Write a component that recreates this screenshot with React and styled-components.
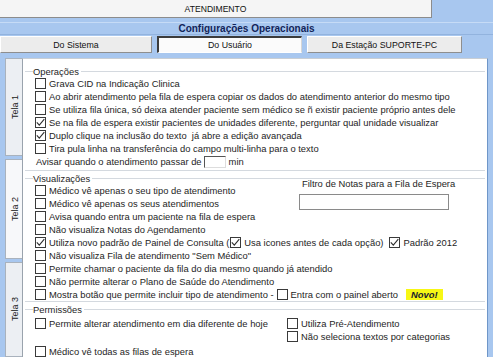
import React from "react";
import styled, { createGlobalStyle } from "styled-components";

const GlobalStyle = createGlobalStyle`
  *, *::before, *::after {
    box-sizing: border-box;
  }
  html, body {
    margin: 0;
    padding: 0;
    background: #a8c7ef;
  }
  body {
    font-family: "Liberation Sans", Arial, sans-serif;
    font-size: 9.4px;
    color: #1e1e1e;
  }
`;

const Screen = styled.div`
  width: 493px;
  height: 357px;
  overflow: hidden;
  background: #a8c7ef;
  display: flex;
  flex-direction: column;
`;

const NameField = styled.div`
  width: 432px;
  height: 18px;
  flex: none;
  background: #f5f5f5;
  border-right: 1px solid #8c8c8c;
  border-bottom: 1px solid #8c8c8c;
  display: flex;
  align-items: center;
  justify-content: center;
  font-size: 8.6px;
  color: #111;
`;

const TitleBar = styled.div`
  margin-top: 4px;
  height: 13px;
  flex: none;
  border-top: 1px solid #c6dbf6;
  border-bottom: 1px solid #92b3de;
  display: flex;
  align-items: center;
  justify-content: center;
  font-size: 10px;
  font-weight: bold;
  color: #122459;
`;

const TabRow = styled.div`
  display: flex;
  gap: 5px;
  height: 17px;
  flex: none;
  margin-top: 1px;
`;

const Tab = styled.div`
  width: ${p => p.$w}px;
  display: flex;
  align-items: center;
  justify-content: center;
  font-size: 8.8px;
  color: #111;
  background: ${p => (p.$active ? "#fbfbfb" : "#ececec")};
  border-style: solid;
  border-width: ${p => (p.$active ? "2px 1px 1px 2px" : "1px")};
  border-color: ${p =>
    p.$active ? "#3c3c3c #d6d6d6 #ffffff #3c3c3c" : "#ffffff #8e8e8e #8e8e8e #ffffff"};
`;

const Body = styled.div`
  flex: 1;
  display: flex;
  margin-top: 5px;
  min-height: 0;
`;

const SideTabs = styled.div`
  width: 22px;
  flex: none;
  display: flex;
  flex-direction: column;
  gap: 3px;
  padding-left: 5px;
`;

const SideTab = styled.div`
  height: ${p => p.$h}px;
  flex: ${p => (p.$h ? "none" : "1")};
  background: ${p => (p.$light ? "#f7f8fa" : "#eceff3")};
  border: 1px solid #a9b2bd;
  border-right: none;
  display: flex;
  align-items: center;
  justify-content: flex-end;
  padding-right: 2px;
  span {
    writing-mode: vertical-rl;
    transform: rotate(180deg);
    font-size: 9px;
    color: #222;
  }
`;

const Panel = styled.div`
  flex: 1;
  margin-right: 5px;
  background: #fff;
  border-left: 1px solid #9aa3ad;
  border-top: 1px solid #c9ced4;
  border-right: 1px solid #6f96c8;
  padding: 6px 2px 0 2px;
  overflow: hidden;
`;

const Group = styled.div`
  padding: 0 0 ${p => p.$pb || 0}px 10px;
  border-bottom: ${p => (p.$open ? "none" : "1px solid #d4d9df")};
  margin-top: ${p => p.$mt || 0}px;
`;

const GroupHead = styled.div`
  display: flex;
  align-items: center;
  height: ${p => p.$h || 12}px;
  margin-left: -10px;
  white-space: nowrap;
  &::before {
    content: "";
    width: 8px;
    border-top: 1px solid #d4d9df;
  }
  &::after {
    content: "";
    flex: 1;
    margin-left: 2px;
    border-top: 1px solid #d4d9df;
  }
`;

const Row = styled.div`
  display: flex;
  align-items: center;
  height: 13px;
  white-space: nowrap;
  margin-left: ${p => p.$ml || 0}px;
  margin-top: ${p => p.$mt || 0}px;
`;

const Option = styled.span`
  display: inline-flex;
  align-items: center;
  gap: 3px;
  margin-left: ${p => p.$ml || 0}px;
`;

const Box = styled.span`
  width: 11px;
  height: 11px;
  flex: none;
  border: 1px solid #3a3a3a;
  background: #fff;
  display: inline-flex;
  align-items: center;
  justify-content: center;
`;

const SmallInput = styled.span`
  width: 22px;
  height: 12px;
  margin: 0 3px 0 2px;
  background: #fff;
  border-top: 1px solid #555;
  border-left: 1px solid #555;
  border-right: 1px solid #ddd;
  border-bottom: 1px solid #ddd;
`;

const Split = styled.div`
  display: flex;
`;

const Column = styled.div`
  display: flex;
  flex-direction: column;
  width: ${p => p.$w}px;
  flex: none;
`;

const Filter = styled.div`
  margin-top: -6px;
  display: flex;
  flex-direction: column;
  width: 160px;
  span {
    padding-left: 3px;
    height: 11px;
    line-height: 11px;
    white-space: nowrap;
  }
`;

const FilterInput = styled.div`
  margin-top: 5px;
  width: 150px;
  height: 16px;
  background: #fff;
  border: 1px solid #8a8a8a;
`;

const NewBadge = styled.span`
  margin-left: 8px;
  padding: 0 5px;
  height: 11px;
  line-height: 11px;
  background: #f7f715;
  font-weight: bold;
  font-style: italic;
  color: #1a1a2e;
`;

const PermGrid = styled.div`
  display: grid;
  grid-template-columns: 252px auto;
  grid-template-rows: 13px 13px 13px;
  padding-top: 2px;
`;

const Check = ({ checked, children, ml }) => (
  <Option $ml={ml}>
    <Box>
      {checked && (
        <svg width="9" height="9" viewBox="0 0 9 9">
          <polyline points="0.8,4.3 3.3,7.2 8.3,1.2" fill="none" stroke="#2f2f2f" strokeWidth="1.1" />
        </svg>
      )}
    </Box>
    {children && <span>{children}</span>}
  </Option>
);

const App = () => (
  <Screen>
    <GlobalStyle />
    <NameField>ATENDIMENTO</NameField>
    <TitleBar>Configurações Operacionais</TitleBar>
    <TabRow>
      <Tab $w={152}>Do Sistema</Tab>
      <Tab $w={145} $active>Do Usuário</Tab>
      <Tab $w={155}>Da Estação SUPORTE-PC</Tab>
    </TabRow>
    <Body>
      <SideTabs>
        <SideTab $h={98}><span>Tela 1</span></SideTab>
        <SideTab $h={100} $light><span>Tela 2</span></SideTab>
        <SideTab><span>Tela 3</span></SideTab>
      </SideTabs>
      <Panel>
        <Group $pb={2}>
          <GroupHead>Operações</GroupHead>
          <Row><Check>Grava CID na Indicação Clinica</Check></Row>
          <Row><Check>Ao abrir atendimento pela fila de espera copiar os dados do atendimento anterior do mesmo tipo</Check></Row>
          <Row><Check>Se utiliza fila única, só deixa atender paciente sem médico se ñ existir paciente próprio antes dele</Check></Row>
          <Row><Check checked>Se na fila de espera existir pacientes de unidades diferente, perguntar qual unidade visualizar</Check></Row>
          <Row><Check checked>Duplo clique na inclusão do texto {"\u00a0"}já abre a edição avançada</Check></Row>
          <Row><Check>Tira pula linha na transferência do campo multi-linha para o texto</Check></Row>
          <Row $ml={1}>
            Avisar quando o atendimento passar de
            <SmallInput />
            min
          </Row>
        </Group>
        <Group $mt={2}>
          <GroupHead $h={11}>Visualizações</GroupHead>
          <Split>
            <Column $w={264}>
              <Row><Check>Médico vê apenas o seu tipo de atendimento</Check></Row>
              <Row><Check>Médico vê apenas os seus atendimentos</Check></Row>
              <Row><Check>Avisa quando entra um paciente na fila de espera</Check></Row>
              <Row><Check>Não visualiza Notas do Agendamento</Check></Row>
            </Column>
            <Filter>
              <span>Filtro de Notas para a Fila de Espera</span>
              <FilterInput />
            </Filter>
          </Split>
          <Row>
            <Check checked>Utiliza novo padrão de Painel de Consulta (</Check>
            <Check checked ml={1}>Usa icones antes de cada opção)</Check>
            <Check checked ml={6}>Padrão 2012</Check>
          </Row>
          <Row><Check>Não visualiza Fila de atendimento "Sem Médico"</Check></Row>
          <Row><Check>Permite chamar o paciente da fila do dia mesmo quando já atendido</Check></Row>
          <Row><Check>Não permite alterar o Plano de Saúde do Atendimento</Check></Row>
          <Row>
            <Check>Mostra botão que permite incluir tipo de atendimento -</Check>
            <Check ml={3}>Entra com o painel aberto</Check>
            <NewBadge>Novo!</NewBadge>
          </Row>
        </Group>
        <Group $mt={2} $open>
          <GroupHead $h={11}>Permissões</GroupHead>
          <PermGrid>
            <Row><Check>Permite alterar atendimento em dia diferente de hoje</Check></Row>
            <Row><Check>Utiliza Pré-Atendimento</Check></Row>
            <span />
            <Row><Check>Não seleciona textos por categorias</Check></Row>
            <Row $mt={2}><Check>Médico vê todas as filas de espera</Check></Row>
          </PermGrid>
        </Group>
      </Panel>
    </Body>
  </Screen>
);

export default App;
